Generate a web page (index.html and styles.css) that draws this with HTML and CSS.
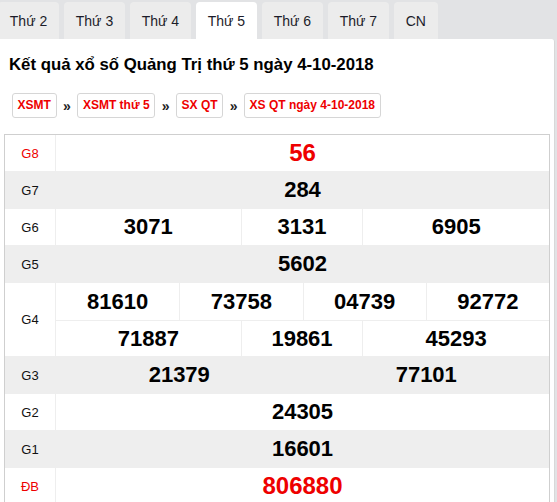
FILE: index.html
```html
<!DOCTYPE html>
<html lang="vi">
<head>
<meta charset="utf-8">
<title>XSQT</title>
<link rel="stylesheet" href="styles.css">
</head>
<body>
<nav class="tabs">
  <a class="tab first">Thứ 2</a>
  <a class="tab">Thứ 3</a>
  <a class="tab">Thứ 4</a>
  <a class="tab active">Thứ 5</a>
  <a class="tab">Thứ 6</a>
  <a class="tab">Thứ 7</a>
  <a class="tab">CN</a>
</nav>
<main class="panel">
  <h2 class="title">Kết quả xổ số Quảng Trị thứ 5 ngày 4-10-2018</h2>
  <div class="crumbs">
    <a class="crumb">XSMT</a><span class="sep">»</span>
    <a class="crumb">XSMT thứ 5</a><span class="sep">»</span>
    <a class="crumb">SX QT</a><span class="sep">»</span>
    <a class="crumb">XS QT ngày 4-10-2018</a>
  </div>
  <div class="results">
    <div class="row">
      <div class="label red">G8</div>
      <div class="vals c1"><div class="num special">56</div></div>
    </div>
    <div class="row gray">
      <div class="label">G7</div>
      <div class="vals c1"><div class="num">284</div></div>
    </div>
    <div class="row">
      <div class="label">G6</div>
      <div class="vals c3"><div class="num">3071</div><div class="num">3131</div><div class="num">6905</div></div>
    </div>
    <div class="row gray">
      <div class="label">G5</div>
      <div class="vals c1"><div class="num">5602</div></div>
    </div>
    <div class="row">
      <div class="label">G4</div>
      <div class="vals stack">
        <div class="sub c4"><div class="num">81610</div><div class="num">73758</div><div class="num">04739</div><div class="num">92772</div></div>
        <div class="sub c3"><div class="num">71887</div><div class="num">19861</div><div class="num">45293</div></div>
      </div>
    </div>
    <div class="row gray">
      <div class="label">G3</div>
      <div class="vals c2"><div class="num">21379</div><div class="num">77101</div></div>
    </div>
    <div class="row">
      <div class="label">G2</div>
      <div class="vals c1"><div class="num">24305</div></div>
    </div>
    <div class="row gray">
      <div class="label">G1</div>
      <div class="vals c1"><div class="num">16601</div></div>
    </div>
    <div class="row">
      <div class="label red">ĐB</div>
      <div class="vals c1"><div class="num special">806880</div></div>
    </div>
  </div>
</main>
</body>
</html>
```

FILE: styles.css
```css
* { box-sizing: border-box; }
html, body { margin: 0; padding: 0; }
body {
  background: #e2e3e5;
  font-family: "Liberation Sans", Arial, sans-serif;
  color: #000;
  width: 557px;
  overflow: hidden;
}
.tabs {
  display: flex;
  gap: 5px;
  padding: 2px 0 0 0;
  height: 39px;
}
.tab {
  display: flex;
  align-items: center;
  height: 37px;
  padding: 0 11.8px;
  background: #ececec;
  border-radius: 4px 4px 0 0;
  font-size: 14px;
  color: #1c1c2a;
}
.tab.first { margin-left: -2px; }
.tab.active { background: #fff; }
.panel {
  background: #fff;
  width: 555px;
  border-radius: 0 3px 0 0;
  border-right: 1px solid #d8d8d8;
  padding: 16px 4px 0 4px;
}
.title {
  margin: 0 0 0 5px;
  font-size: 16.8px;
  line-height: 20px;
  font-weight: bold;
  color: #000;
}
.crumbs {
  display: flex;
  align-items: center;
  margin: 18px 0 16px 8px;
}
.crumb {
  display: block;
  border: 1px solid #d6d6d6;
  border-radius: 3px;
  padding: 3px 4.6px;
  font-size: 12px;
  line-height: 17px;
  font-weight: bold;
  color: #e00;
}
.sep {
  margin: 0 6.5px;
  font-size: 14px;
  font-weight: bold;
  color: #222;
}
.results {
  border: 1px solid #cfcfcf;
  border-bottom: none;
}
.row {
  display: grid;
  grid-template-columns: 51px 1fr;
  border-bottom: 1px solid #eee;
}
.row.gray { background: #eee; }
.label {
  display: flex;
  align-items: center;
  justify-content: center;
  border-right: 1px solid #eee;
  font-size: 13px;
  color: #111;
}
.label.red { color: #e00; }
.vals { display: grid; }
.c1 { grid-template-columns: 1fr; }
.c2 { grid-template-columns: 1fr 1fr; }
.c3 { grid-template-columns: 185fr 122fr 187fr; }
.c4 { grid-template-columns: 1fr 1fr 1fr 1fr; }
.stack { grid-template-rows: 37px 36px; }
.sub { display: grid; }
.sub + .sub { border-top: 1px solid #eee; }
.num {
  display: flex;
  align-items: center;
  justify-content: center;
  height: 36px;
  font-size: 22px;
  font-weight: bold;
  color: #000;
}
.sub .num { height: auto; }
.c2 .num + .num, .c3 .num + .num, .c4 .num + .num { border-left: 1px solid #eee; }
.num.special { font-size: 24px; color: #e00; }
```
